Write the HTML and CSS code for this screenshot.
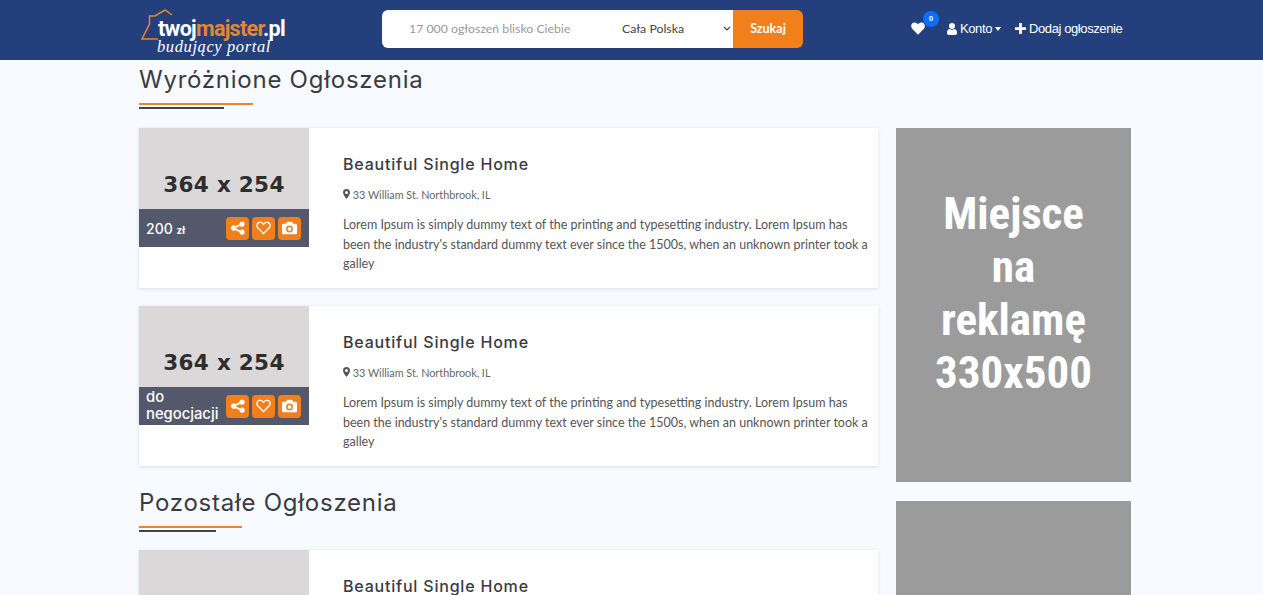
FILE: index.html
```html
<!DOCTYPE html>
<html lang="pl">
<head>
    <meta charset="UTF-8">
    <meta name="viewport" content="width=device-width, initial-scale=1.0">
    <title>twojmajster.pl</title>
    <link rel="stylesheet" href="styles.css">
</head>
<body>
    <header class="topbar">
        <a class="logo" href="#">
            <svg class="logo-house" width="34" height="32" viewBox="0 0 34 32" fill="none">
                <path d="M18 30 H2 L9.500 15 V7 H15 L25 1 L32 6" stroke="#e9862b" stroke-width="1.500"/>
            </svg>
            <span class="logo-name">twoj<span class="logo-accent">majster</span>.pl</span>
            <span class="logo-sub">budujący portal</span>
        </a>

        <form class="search">
            <input class="search-input" type="text" placeholder="17 000 ogłoszeń blisko Ciebie">
            <select class="search-select">
                <option>Cała Polska</option>
            </select>
            <button class="search-button" type="button">Szukaj</button>
        </form>

        <nav class="usernav">
            <a class="fav" href="#">
                <svg width="14" height="13" viewBox="0 0 24 22"><path fill="#fff" d="M12 21.500 2.400 11.700C-.6 8.600-.3 4.400 2.300 2.100 4.900-.2 9 .3 12 3.800 15 .3 19.100-.2 21.700 2.100c2.600 2.300 2.900 6.500-.1 9.600z"/></svg>
                <span class="fav-badge">0</span>
            </a>
            <a class="navlink" href="#">
                <svg width="10" height="12" viewBox="0 0 20 24"><circle cx="10" cy="6" r="6" fill="#fff"/><path fill="#fff" d="M0 20c0-6 3-8 5-8 1.500 1 3 1.500 5 1.500s3.500-.5 5-1.500c2 0 5 2 5 8 0 2.500-1.500 4-4 4H4c-2.500 0-4-1.500-4-4z"/></svg>
                Konto<span class="caret"></span>
            </a>
            <a class="navlink" href="#">
                <svg width="11" height="11" viewBox="0 0 12 12"><path fill="#fff" d="M4.500 0h3v4.500H12v3H7.500V12h-3V7.500H0v-3h4.500z"/></svg>
                Dodaj ogłoszenie
            </a>
        </nav>
    </header>

    <div class="container">
        <main class="listings">
            <h2 class="section-title">Wyróżnione Ogłoszenia</h2>
            <div class="title-rule rule-long"></div>

            <article class="card">
                <div class="card-photo">
                    <div class="placeholder">364 x 254</div>
                    <div class="photo-bar">
                        <span class="price">200 <small>zł</small></span>
                        <div class="photo-actions">
                            <a class="action" href="#"><svg width="14" height="14" viewBox="0 0 24 24"><use href="#i-share"/></svg></a>
                            <a class="action" href="#"><svg width="15" height="14" viewBox="0 0 24 22"><use href="#i-heart"/></svg></a>
                            <a class="action" href="#"><svg width="15" height="14" viewBox="0 0 24 22"><use href="#i-camera"/></svg></a>
                        </div>
                    </div>
                </div>
                <div class="card-body">
                    <h3 class="card-title">Beautiful Single Home</h3>
                    <p class="card-address"><svg width="7" height="10" viewBox="0 0 14 20"><use href="#i-pin"/></svg> 33 William St. Northbrook, IL</p>
                    <p class="card-text">Lorem Ipsum is simply dummy text of the printing and typesetting industry. Lorem Ipsum has been the industry's standard dummy text ever since the 1500s, when an unknown printer took a galley</p>
                </div>
            </article>

            <article class="card">
                <div class="card-photo">
                    <div class="placeholder">364 x 254</div>
                    <div class="photo-bar">
                        <span class="price price-long">do negocjacji</span>
                        <div class="photo-actions">
                            <a class="action" href="#"><svg width="14" height="14" viewBox="0 0 24 24"><use href="#i-share"/></svg></a>
                            <a class="action" href="#"><svg width="15" height="14" viewBox="0 0 24 22"><use href="#i-heart"/></svg></a>
                            <a class="action" href="#"><svg width="15" height="14" viewBox="0 0 24 22"><use href="#i-camera"/></svg></a>
                        </div>
                    </div>
                </div>
                <div class="card-body">
                    <h3 class="card-title">Beautiful Single Home</h3>
                    <p class="card-address"><svg width="7" height="10" viewBox="0 0 14 20"><use href="#i-pin"/></svg> 33 William St. Northbrook, IL</p>
                    <p class="card-text">Lorem Ipsum is simply dummy text of the printing and typesetting industry. Lorem Ipsum has been the industry's standard dummy text ever since the 1500s, when an unknown printer took a galley</p>
                </div>
            </article>

            <h2 class="section-title section-next">Pozostałe Ogłoszenia</h2>
            <div class="title-rule rule-short"></div>

            <article class="card">
                <div class="card-photo">
                    <div class="placeholder">364 x 254</div>
                </div>
                <div class="card-body">
                    <h3 class="card-title">Beautiful Single Home</h3>
                </div>
            </article>
        </main>

        <aside class="sidebar">
            <div class="ad">Miejsce na reklamę 330x500</div>
            <div class="ad"></div>
        </aside>
    </div>

    <svg class="icon-defs" width="0" height="0">
        <symbol id="i-share" viewBox="0 0 24 24"><path fill="#fff" d="M19 1a4.500 4.500 0 1 1-3.400 7.500l-6.800 3a4.500 4.500 0 0 1 0 1.500l6.800 3.200A4.500 4.500 0 1 1 14.500 19l-7-3.300a4.500 4.500 0 1 1 0-7l7-3.300A4.500 4.500 0 0 1 19 1z"/></symbol>
        <symbol id="i-heart" viewBox="0 0 24 22"><path fill="none" stroke="#fff" stroke-width="2.200" d="M12 20 3.300 11.100C.8 8.500 1 5 3.200 3 5.500 1 9.400 1.500 12 5c2.600-3.500 6.500-4 8.800-2 2.200 2 2.400 5.500-.1 8.100z"/></symbol>
        <symbol id="i-camera" viewBox="0 0 24 22"><path fill="#fff" fill-rule="evenodd" d="M8 1h8l2 3h4a2 2 0 0 1 2 2v13a2 2 0 0 1-2 2H2a2 2 0 0 1-2-2V6a2 2 0 0 1 2-2h4zM12 7a5.500 5.500 0 1 0 0 11 5.500 5.500 0 0 0 0-11zm0 2.500a3 3 0 1 1 0 6 3 3 0 0 1 0-6z"/></symbol>
        <symbol id="i-pin" viewBox="0 0 14 20"><path fill="#555" fill-rule="evenodd" d="M7 0a7 7 0 0 1 7 7c0 3.500-4 9-7 13C4 16 0 10.500 0 7a7 7 0 0 1 7-7zm0 4a3 3 0 1 0 0 6 3 3 0 0 0 0-6z"/></symbol>
    </svg>
</body>
</html>
```

FILE: styles.css
```css
html, body {
    height: 100%;
    overflow: hidden;
}

body {
    font-family: 'Lato', sans-serif;
    margin: 0;
    padding: 0;
    color: #555;
    background-color: #f7faff;
}

.topbar {
    height: 60px;
    box-sizing: border-box;
    background-color: #24407c;
    display: flex;
    align-items: center;
    padding: 0 0 3px 140px;
}

.logo {
    position: relative;
    display: block;
    width: 242px;
    height: 57px;
    flex-shrink: 0;
    text-decoration: none;
    color: white;
}

.logo-house {
    position: absolute;
    left: 0;
    top: 9px;
}

.logo-name {
    position: absolute;
    left: 18px;
    top: 19px;
    font-family: 'Roboto', sans-serif;
    font-size: 21.500px;
    font-weight: 700;
    letter-spacing: -0.7px;
    line-height: 20px;
    color: white;
}

.logo-accent {
    color: #e9862b;
}

.logo-sub {
    position: absolute;
    left: 17px;
    top: 39px;
    font-family: 'Liberation Serif', serif;
    font-style: italic;
    font-size: 16.500px;
    line-height: 15px;
    letter-spacing: 0.6px;
    color: white;
}

.search {
    display: flex;
    flex-shrink: 0;
    width: 421px;
    height: 38px;
}

.search-input {
    width: 221px;
    box-sizing: border-box;
    border: none;
    outline: none;
    padding: 0 0 0 27px;
    border-radius: 6px 0 0 6px;
    font-family: 'Lato', sans-serif;
    font-size: 12.300px;
    background-color: white;
}

.search-input::placeholder {
    color: #9a9a9a;
    opacity: 1;
}

.search-select {
    width: 130px;
    box-sizing: border-box;
    border: none;
    outline: none;
    padding: 0 0 0 19px;
    font-family: 'Lato', sans-serif;
    font-size: 12.300px;
    color: #444;
    appearance: none;
    background: white url("data:image/svg+xml,%3Csvg xmlns='http://www.w3.org/2000/svg' width='8' height='5'%3E%3Cpath d='M1 1l3 3 3-3' fill='none' stroke='%23444' stroke-width='1.200'/%3E%3C/svg%3E") no-repeat right 2px center;
}

.search-button {
    width: 70px;
    border: none;
    border-radius: 0 6px 6px 0;
    background-color: #f07f1c;
    color: white;
    font-family: 'Lato', sans-serif;
    font-size: 12.500px;
    font-weight: 700;
    padding: 0;
}

.usernav {
    margin-left: 108px;
    display: flex;
    align-items: center;
    gap: 14px;
    white-space: nowrap;
}

.usernav a {
    color: white;
    text-decoration: none;
}

.fav {
    position: relative;
    display: flex;
    margin-right: 8px;
}

.fav-badge {
    position: absolute;
    left: 12px;
    top: -11px;
    width: 16px;
    height: 16px;
    border-radius: 50%;
    background-color: #0d6efd;
    color: white;
    font-family: 'Liberation Sans', sans-serif;
    font-size: 8px;
    font-weight: 700;
    line-height: 15px;
    text-align: center;
}

.navlink {
    display: flex;
    align-items: center;
    gap: 3px;
    font-family: 'Liberation Sans', sans-serif;
    font-size: 13px;
    letter-spacing: -0.4px;
}

.caret {
    margin-left: 0;
    border-top: 4px solid white;
    border-left: 3.500px solid transparent;
    border-right: 3.500px solid transparent;
}

.container {
    margin-left: 139px;
    width: 992px;
    display: flex;
    gap: 18px;
    align-items: flex-start;
}

.listings {
    width: 739px;
}

.sidebar {
    width: 235px;
    margin-top: 68px;
    display: flex;
    flex-direction: column;
    gap: 19px;
}

.section-title {
    margin: 0;
    font-family: 'Inter', sans-serif;
    font-size: 24px;
    font-weight: 400;
    line-height: 40px;
    letter-spacing: 0.75px;
    color: #3b3b3f;
}

.section-next {
    margin-top: -1px;
}

.title-rule {
    position: relative;
    height: 6px;
    margin: 3px 0 19px;
    border-top: 2px solid #e9862b;
    box-sizing: border-box;
}

.title-rule:after {
    content: '';
    position: absolute;
    left: 0;
    top: 2px;
    height: 2px;
    background-color: #444;
}

.rule-long {
    width: 114px;
}

.rule-long:after {
    width: 85px;
}

.rule-short {
    width: 103px;
    margin-bottom: 18px;
}

.rule-short:after {
    width: 77px;
}

.card {
    display: flex;
    height: 160px;
    margin-bottom: 18px;
    background-color: white;
    box-shadow: 0 1px 4px rgba(0, 0, 0, 0.12);
}

.card-photo {
    width: 170px;
    flex-shrink: 0;
}

.placeholder {
    height: 81px;
    box-sizing: border-box;
    padding-top: 42px;
    background-color: #dbd8d9;
    color: #2f2e2e;
    font-family: 'DejaVu Sans', sans-serif;
    font-size: 21.500px;
    font-weight: 700;
    line-height: 30px;
    text-align: center;
    white-space: nowrap;
    letter-spacing: 0.3px;
}

.photo-bar {
    height: 38px;
    box-sizing: border-box;
    padding: 0 8px 0 7px;
    display: flex;
    align-items: center;
    justify-content: space-between;
    background-color: #54586b;
}

.price {
    font-family: 'Inter', sans-serif;
    font-size: 14px;
    font-weight: 500;
    color: white;
}

.price small {
    font-size: 10px;
    font-weight: 700;
}

.price-long {
    width: 76px;
    font-size: 14.800px;
    line-height: 17px;
}

.photo-actions {
    display: flex;
    gap: 3px;
}

.action {
    width: 23px;
    height: 23px;
    border-radius: 4px;
    background-color: #f07f1c;
    display: flex;
    align-items: center;
    justify-content: center;
}

.card-body {
    padding: 24px 8px 0 34px;
}

.card-title {
    margin: 0;
    font-family: 'Inter', sans-serif;
    font-size: 16px;
    font-weight: 500;
    line-height: 24px;
    letter-spacing: 0.8px;
    color: #3b3b3f;
}

.card-address {
    margin: 10px 0 0;
    font-size: 10.800px;
    line-height: 18px;
    color: #666;
}

.card-text {
    margin: 11px 0 0;
    font-size: 12.500px;
    line-height: 19.500px;
    color: #555;
}

.ad {
    height: 354px;
    box-sizing: border-box;
    padding: 59px 30px 0;
    background-color: #9b9b9b;
    color: white;
    font-family: 'Roboto', sans-serif;
    font-stretch: condensed;
    font-size: 45px;
    font-weight: 700;
    line-height: 53px;
    text-align: center;
}

.icon-defs {
    position: absolute;
}
```
